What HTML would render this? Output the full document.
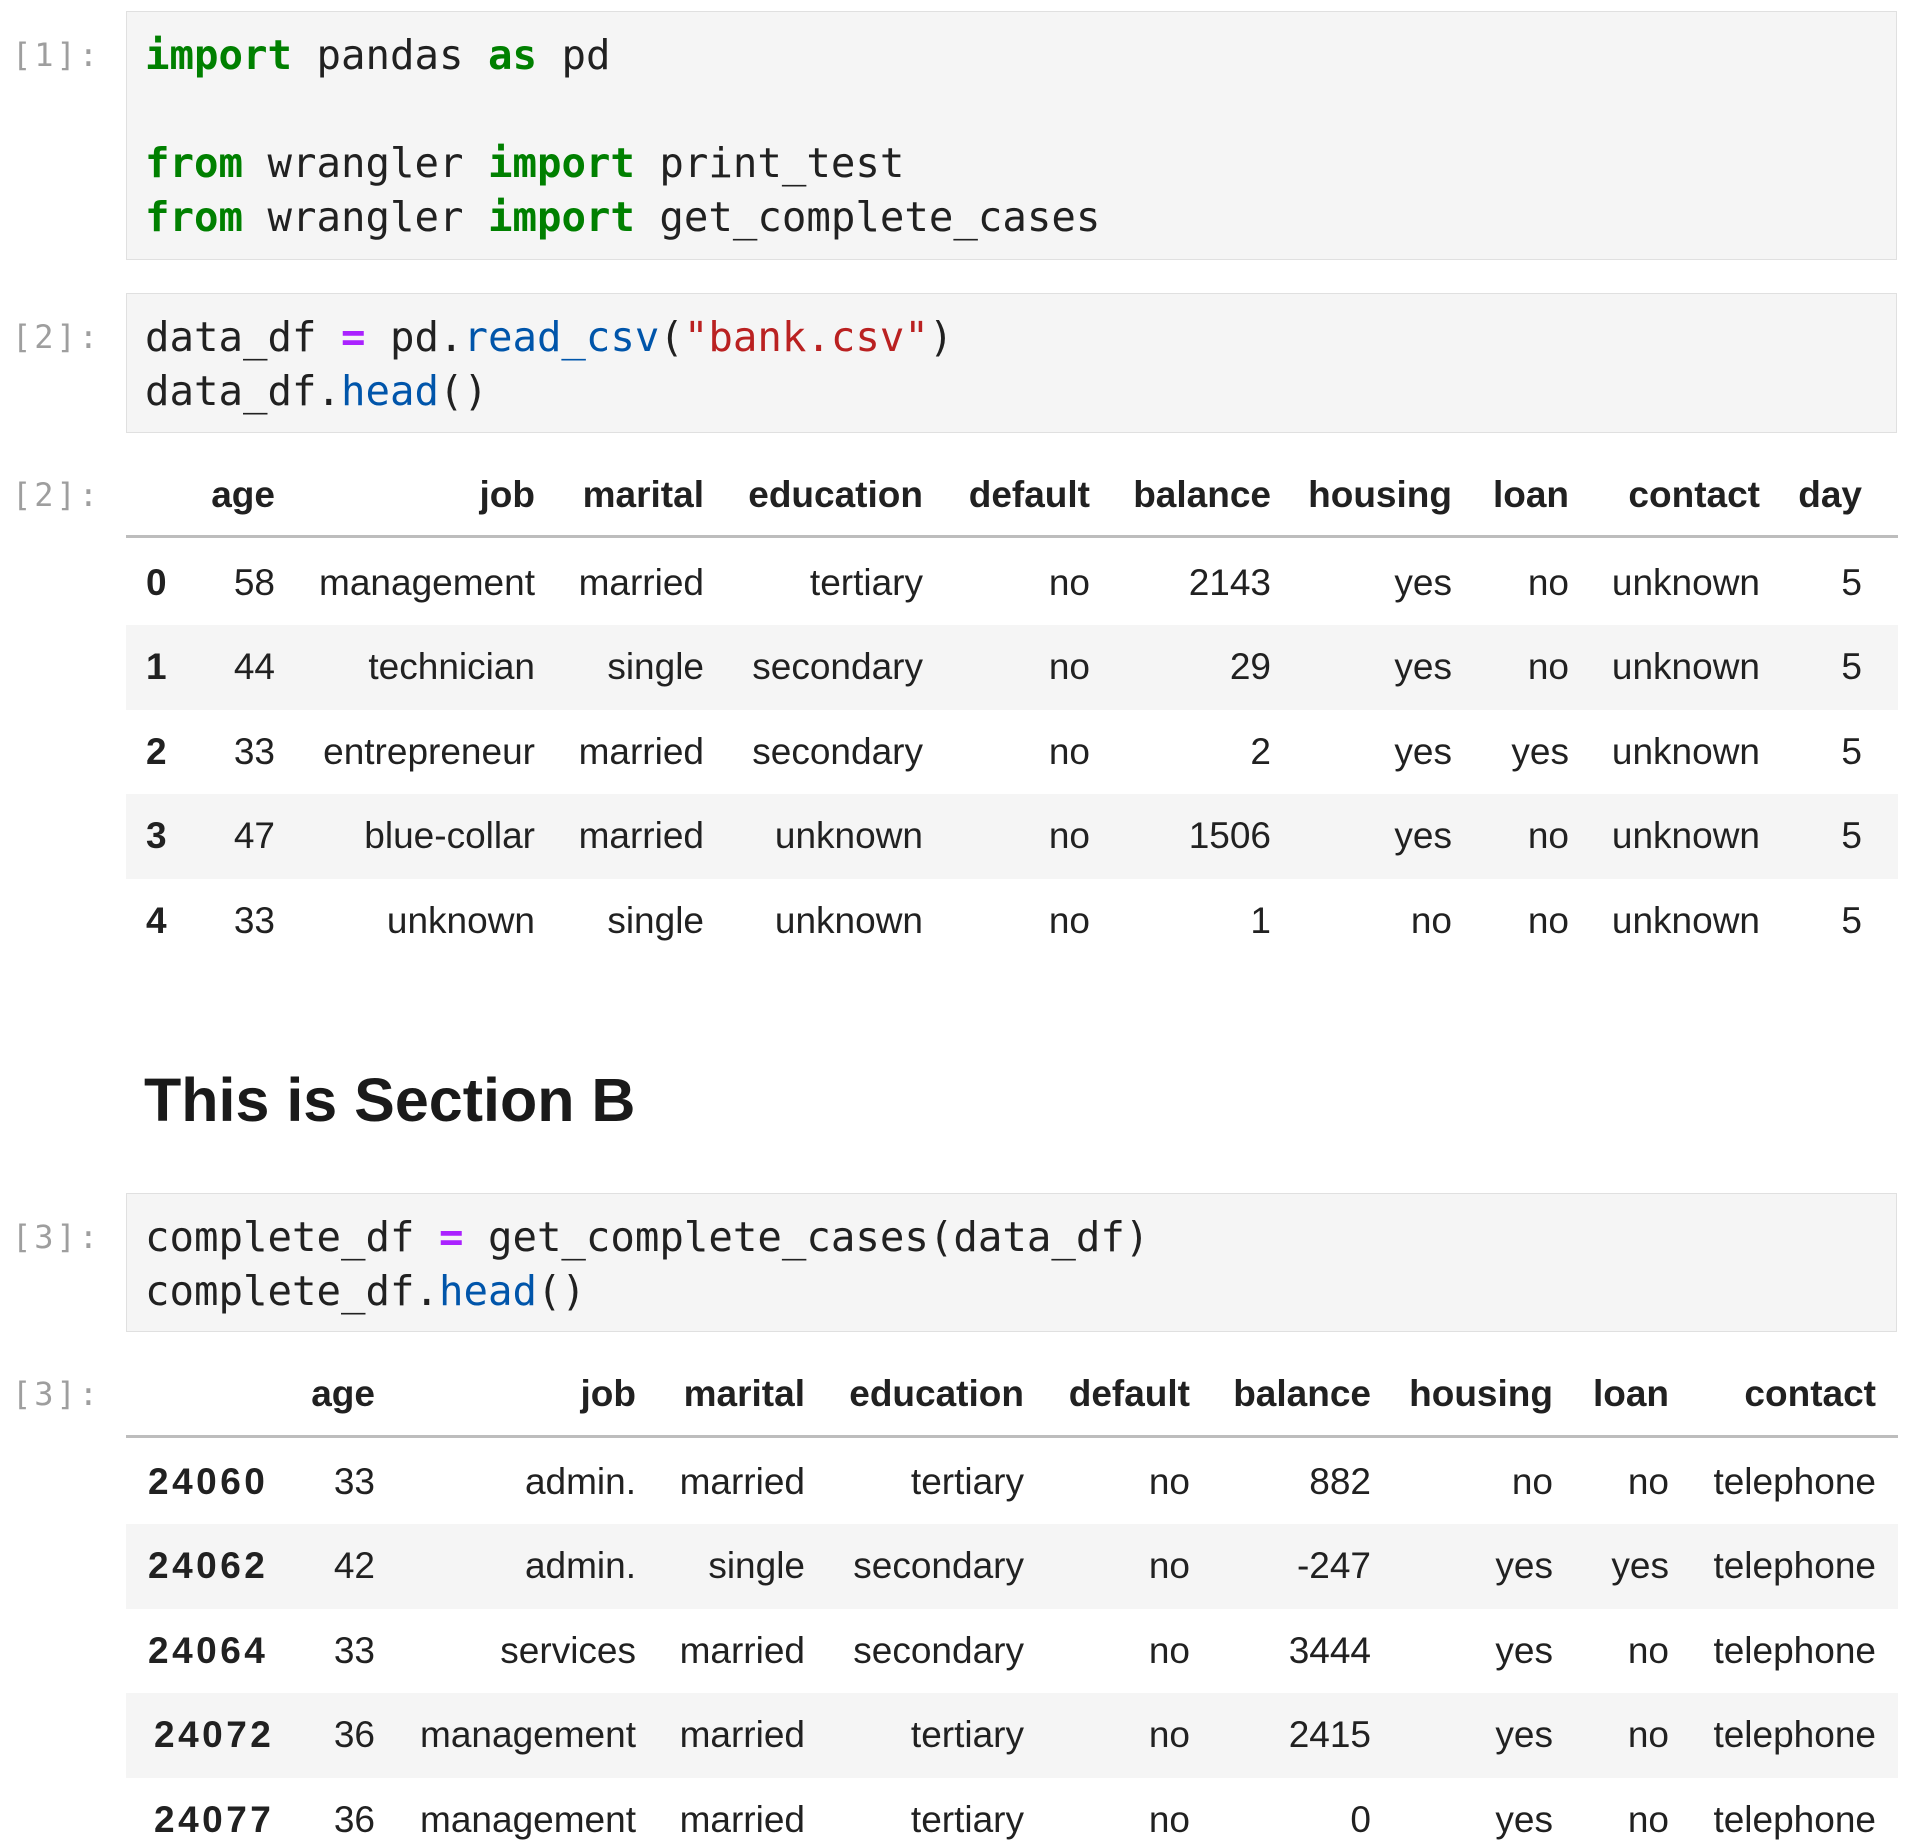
<!DOCTYPE html>
<html><head><meta charset="utf-8"><style>
body{margin:0;width:1920px;height:1845px;background:#fff;position:relative;overflow:hidden;font-family:"Liberation Sans",sans-serif;color:#212121}
.box{position:absolute;left:126px;width:1771px;background:#f5f5f5;border:1px solid #e0e0e0;box-sizing:border-box}
.code{position:absolute;left:145px;font-family:"DejaVu Sans Mono","Liberation Mono",monospace;font-size:40.7px;line-height:54px;white-space:pre;color:#212121}
.p{position:absolute;left:12px;font-family:"DejaVu Sans Mono","Liberation Mono",monospace;font-size:32px;color:#9e9e9e;letter-spacing:3px}
.k{color:#008000;font-weight:bold}.o{color:#aa22ff;font-weight:bold}.f{color:#0055aa}.s{color:#ba2121}
.c{position:absolute;height:50px;line-height:50px;font-size:37px;white-space:nowrap;text-align:right}
.h{font-weight:bold}
.i{position:absolute;height:50px;line-height:50px;font-size:37px;font-weight:bold;letter-spacing:3.5px}
.st{position:absolute;left:126px;width:1772px;height:85px;background:#f5f5f5}
.hl{position:absolute;left:126px;width:1772px;height:3px;background:#bdbdbd}
</style></head><body>
<div class="box" style="top:11px;height:249px"></div>
<div class="p" style="top:36px">[1]:</div>
<div class="code" style="top:28px"><span class="k">import</span> pandas <span class="k">as</span> pd

<span class="k">from</span> wrangler <span class="k">import</span> print_test
<span class="k">from</span> wrangler <span class="k">import</span> get_complete_cases</div>

<div class="box" style="top:293px;height:140px"></div>
<div class="p" style="top:318px">[2]:</div>
<div class="code" style="top:310px">data_df <span class="o">=</span> pd.<span class="f">read_csv</span>(<span class="s">"bank.csv"</span>)
data_df.<span class="f">head</span>()</div>

<div class="p" style="top:476px">[2]:</div>
<div class="hl" style="top:535px"></div>
<div class="st" style="top:625px"></div>
<div class="st" style="top:794px"></div>
<div class="c h" style="top:470px;right:1645px">age</div>
<div class="c h" style="top:470px;right:1385px">job</div>
<div class="c h" style="top:470px;right:1216px">marital</div>
<div class="c h" style="top:470px;right:997px">education</div>
<div class="c h" style="top:470px;right:830px">default</div>
<div class="c h" style="top:470px;right:649px">balance</div>
<div class="c h" style="top:470px;right:468px">housing</div>
<div class="c h" style="top:470px;right:351px">loan</div>
<div class="c h" style="top:470px;right:160px">contact</div>
<div class="c h" style="top:470px;right:58px">day</div>
<div class="i" style="top:558px;left:146px">0</div>
<div class="c" style="top:558px;right:1645px">58</div><div class="c" style="top:558px;right:1385px">management</div><div class="c" style="top:558px;right:1216px">married</div><div class="c" style="top:558px;right:997px">tertiary</div><div class="c" style="top:558px;right:830px">no</div><div class="c" style="top:558px;right:649px">2143</div><div class="c" style="top:558px;right:468px">yes</div><div class="c" style="top:558px;right:351px">no</div><div class="c" style="top:558px;right:160px">unknown</div><div class="c" style="top:558px;right:58px">5</div>
<div class="i" style="top:642px;left:146px">1</div>
<div class="c" style="top:642px;right:1645px">44</div><div class="c" style="top:642px;right:1385px">technician</div><div class="c" style="top:642px;right:1216px">single</div><div class="c" style="top:642px;right:997px">secondary</div><div class="c" style="top:642px;right:830px">no</div><div class="c" style="top:642px;right:649px">29</div><div class="c" style="top:642px;right:468px">yes</div><div class="c" style="top:642px;right:351px">no</div><div class="c" style="top:642px;right:160px">unknown</div><div class="c" style="top:642px;right:58px">5</div>
<div class="i" style="top:727px;left:146px">2</div>
<div class="c" style="top:727px;right:1645px">33</div><div class="c" style="top:727px;right:1385px">entrepreneur</div><div class="c" style="top:727px;right:1216px">married</div><div class="c" style="top:727px;right:997px">secondary</div><div class="c" style="top:727px;right:830px">no</div><div class="c" style="top:727px;right:649px">2</div><div class="c" style="top:727px;right:468px">yes</div><div class="c" style="top:727px;right:351px">yes</div><div class="c" style="top:727px;right:160px">unknown</div><div class="c" style="top:727px;right:58px">5</div>
<div class="i" style="top:811px;left:146px">3</div>
<div class="c" style="top:811px;right:1645px">47</div><div class="c" style="top:811px;right:1385px">blue-collar</div><div class="c" style="top:811px;right:1216px">married</div><div class="c" style="top:811px;right:997px">unknown</div><div class="c" style="top:811px;right:830px">no</div><div class="c" style="top:811px;right:649px">1506</div><div class="c" style="top:811px;right:468px">yes</div><div class="c" style="top:811px;right:351px">no</div><div class="c" style="top:811px;right:160px">unknown</div><div class="c" style="top:811px;right:58px">5</div>
<div class="i" style="top:896px;left:146px">4</div>
<div class="c" style="top:896px;right:1645px">33</div><div class="c" style="top:896px;right:1385px">unknown</div><div class="c" style="top:896px;right:1216px">single</div><div class="c" style="top:896px;right:997px">unknown</div><div class="c" style="top:896px;right:830px">no</div><div class="c" style="top:896px;right:649px">1</div><div class="c" style="top:896px;right:468px">no</div><div class="c" style="top:896px;right:351px">no</div><div class="c" style="top:896px;right:160px">unknown</div><div class="c" style="top:896px;right:58px">5</div>

<div style="position:absolute;left:144px;top:1058px;font-size:61px;font-weight:bold;line-height:84px;color:#1a1a1a">This is Section B</div>

<div class="box" style="top:1193px;height:139px"></div>
<div class="p" style="top:1218px">[3]:</div>
<div class="code" style="top:1210px">complete_df <span class="o">=</span> get_complete_cases(data_df)
complete_df.<span class="f">head</span>()</div>

<div class="p" style="top:1375px">[3]:</div>
<div class="hl" style="top:1435px"></div>
<div class="st" style="top:1524px"></div>
<div class="st" style="top:1693px"></div>
<div class="c h" style="top:1369px;right:1545px">age</div>
<div class="c h" style="top:1369px;right:1284px">job</div>
<div class="c h" style="top:1369px;right:1115px">marital</div>
<div class="c h" style="top:1369px;right:896px">education</div>
<div class="c h" style="top:1369px;right:730px">default</div>
<div class="c h" style="top:1369px;right:549px">balance</div>
<div class="c h" style="top:1369px;right:367px">housing</div>
<div class="c h" style="top:1369px;right:251px">loan</div>
<div class="c h" style="top:1369px;right:44px">contact</div>

<div class="i" style="top:1457px;left:148px">24060</div>
<div class="c" style="top:1457px;right:1545px">33</div><div class="c" style="top:1457px;right:1284px">admin.</div><div class="c" style="top:1457px;right:1115px">married</div><div class="c" style="top:1457px;right:896px">tertiary</div><div class="c" style="top:1457px;right:730px">no</div><div class="c" style="top:1457px;right:549px">882</div><div class="c" style="top:1457px;right:367px">no</div><div class="c" style="top:1457px;right:251px">no</div><div class="c" style="top:1457px;right:44px">telephone</div>
<div class="i" style="top:1541px;left:148px">24062</div>
<div class="c" style="top:1541px;right:1545px">42</div><div class="c" style="top:1541px;right:1284px">admin.</div><div class="c" style="top:1541px;right:1115px">single</div><div class="c" style="top:1541px;right:896px">secondary</div><div class="c" style="top:1541px;right:730px">no</div><div class="c" style="top:1541px;right:549px">-247</div><div class="c" style="top:1541px;right:367px">yes</div><div class="c" style="top:1541px;right:251px">yes</div><div class="c" style="top:1541px;right:44px">telephone</div>
<div class="i" style="top:1626px;left:148px">24064</div>
<div class="c" style="top:1626px;right:1545px">33</div><div class="c" style="top:1626px;right:1284px">services</div><div class="c" style="top:1626px;right:1115px">married</div><div class="c" style="top:1626px;right:896px">secondary</div><div class="c" style="top:1626px;right:730px">no</div><div class="c" style="top:1626px;right:549px">3444</div><div class="c" style="top:1626px;right:367px">yes</div><div class="c" style="top:1626px;right:251px">no</div><div class="c" style="top:1626px;right:44px">telephone</div>
<div class="i" style="top:1710px;left:154px">24072</div>
<div class="c" style="top:1710px;right:1545px">36</div><div class="c" style="top:1710px;right:1284px">management</div><div class="c" style="top:1710px;right:1115px">married</div><div class="c" style="top:1710px;right:896px">tertiary</div><div class="c" style="top:1710px;right:730px">no</div><div class="c" style="top:1710px;right:549px">2415</div><div class="c" style="top:1710px;right:367px">yes</div><div class="c" style="top:1710px;right:251px">no</div><div class="c" style="top:1710px;right:44px">telephone</div>
<div class="i" style="top:1795px;left:154px">24077</div>
<div class="c" style="top:1795px;right:1545px">36</div><div class="c" style="top:1795px;right:1284px">management</div><div class="c" style="top:1795px;right:1115px">married</div><div class="c" style="top:1795px;right:896px">tertiary</div><div class="c" style="top:1795px;right:730px">no</div><div class="c" style="top:1795px;right:549px">0</div><div class="c" style="top:1795px;right:367px">yes</div><div class="c" style="top:1795px;right:251px">no</div><div class="c" style="top:1795px;right:44px">telephone</div>
</body></html>
